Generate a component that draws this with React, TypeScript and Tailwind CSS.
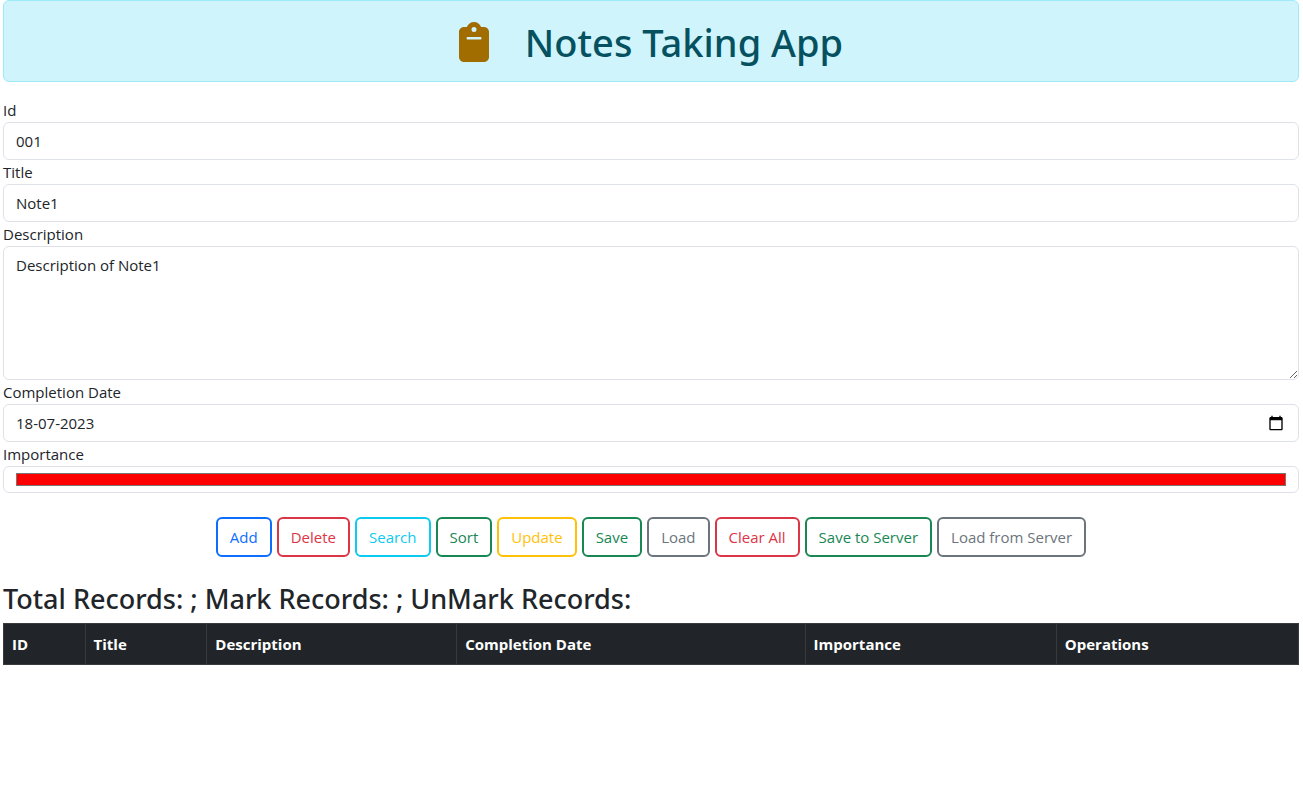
import { useState } from "react";
import { FaClipboard } from "react-icons/fa6";

const fieldClass =
  "block w-full rounded-md border border-[#dee2e6] bg-white px-3 py-1.5 leading-6 text-[#212529] focus:border-[#86b7fe] focus:outline-none";

const actions = [
  { label: "Add", tone: "border-[#0d6efd] text-[#0d6efd]" },
  { label: "Delete", tone: "border-[#dc3545] text-[#dc3545]" },
  { label: "Search", tone: "border-[#0dcaf0] text-[#0dcaf0]" },
  { label: "Sort", tone: "border-[#198754] text-[#198754]" },
  { label: "Update", tone: "border-[#ffc107] text-[#ffc107]" },
  { label: "Save", tone: "border-[#198754] text-[#198754]" },
  { label: "Load", tone: "border-[#6c757d] text-[#6c757d]" },
  { label: "Clear All", tone: "border-[#dc3545] text-[#dc3545]" },
  { label: "Save to Server", tone: "border-[#198754] text-[#198754]" },
  { label: "Load from Server", tone: "border-[#6c757d] text-[#6c757d]" },
];

const columns = [
  { label: "ID", width: "w-[6.3%]" },
  { label: "Title", width: "w-[9.4%]" },
  { label: "Description", width: "w-[19.3%]" },
  { label: "Completion Date", width: "w-[26.9%]" },
  { label: "Importance", width: "w-[19.4%]" },
  { label: "Operations", width: "w-[18.7%]" },
];

function CalendarIcon() {
  return (
    <svg viewBox="0 0 24 24" className="size-4" fill="#000" aria-hidden="true">
      <path d="M20 3h-1V1h-2v2H7V1H5v2H4c-1.1 0-2 .9-2 2v16c0 1.1.9 2 2 2h16c1.1 0 2-.9 2-2V5c0-1.1-.9-2-2-2zm0 18H4V8h16v13z" />
    </svg>
  );
}

export default function App() {
  const [date, setDate] = useState("18-07-2023");
  return (
    <main className="bg-white pr-1 pl-[3px] font-['Open_Sans','Noto_Sans',sans-serif] text-[15px] leading-6 text-[#212529]">
      <h1 className="mb-4 flex items-center justify-center gap-9 rounded-md border border-[#9eeaf9] bg-[#cff4fc] pt-[17px] pb-[15px] font-['Noto_Sans',sans-serif] text-[38px] leading-[48px] font-medium text-[#055160]">
        <FaClipboard className="h-10 w-[30px] text-[#a16c00]" aria-hidden="true" />
        Notes Taking App
      </h1>

      <form onSubmit={(e) => e.preventDefault()}>
        <label htmlFor="id" className="block">Id</label>
        <input id="id" type="text" defaultValue="001" className={fieldClass} />
        <label htmlFor="title" className="block">Title</label>
        <input id="title" type="text" defaultValue="Note1" className={fieldClass} />
        <label htmlFor="desc" className="block">Description</label>
        <textarea id="desc" rows={5} defaultValue="Description of Note1" className={`resize-y ${fieldClass}`} />
        <label htmlFor="date" className="block">Completion Date</label>
        <div className="flex items-center rounded-md border border-[#dee2e6] px-3 py-1.5">
          <input
            id="date"
            type="text"
            value={date}
            onChange={(e) => setDate(e.target.value)}
            className="min-w-0 flex-1 leading-6 focus:outline-none"
          />
          <button type="button" aria-label="Open calendar" className="px-0.5">
            <CalendarIcon />
          </button>
        </div>
        <label htmlFor="importance" className="block">Importance</label>
        <input
          id="importance"
          type="color"
          defaultValue="#ff0000"
          className="block h-[27px] w-full rounded-md border border-[#dee2e6] bg-white px-3 py-1.5 [&::-webkit-color-swatch]:border [&::-webkit-color-swatch]:border-[#777777] [&::-webkit-color-swatch-wrapper]:p-0"
        />
        <div className="mt-6 flex flex-wrap justify-center gap-[5px]">
          {actions.map((a) => (
            <button key={a.label} type="button" className={`rounded-md border-2 px-3 py-1.5 ${a.tone}`}>
              {a.label}
            </button>
          ))}
        </div>
      </form>

      <h3 className="mt-[25px] mb-[7px] font-['Noto_Sans',sans-serif] text-[27px] leading-[34px] font-medium">
        Total Records: ; Mark Records: ; UnMark Records:
      </h3>
      <table className="w-full table-fixed border-collapse bg-[#212529] text-left text-white">
        <thead>
          <tr>
            {columns.map((c) => (
              <th key={c.label} scope="col" className={`border border-[#373b3e] p-2 font-bold ${c.width}`}>
                {c.label}
              </th>
            ))}
          </tr>
        </thead>
        <tbody />
      </table>
    </main>
  );
}
